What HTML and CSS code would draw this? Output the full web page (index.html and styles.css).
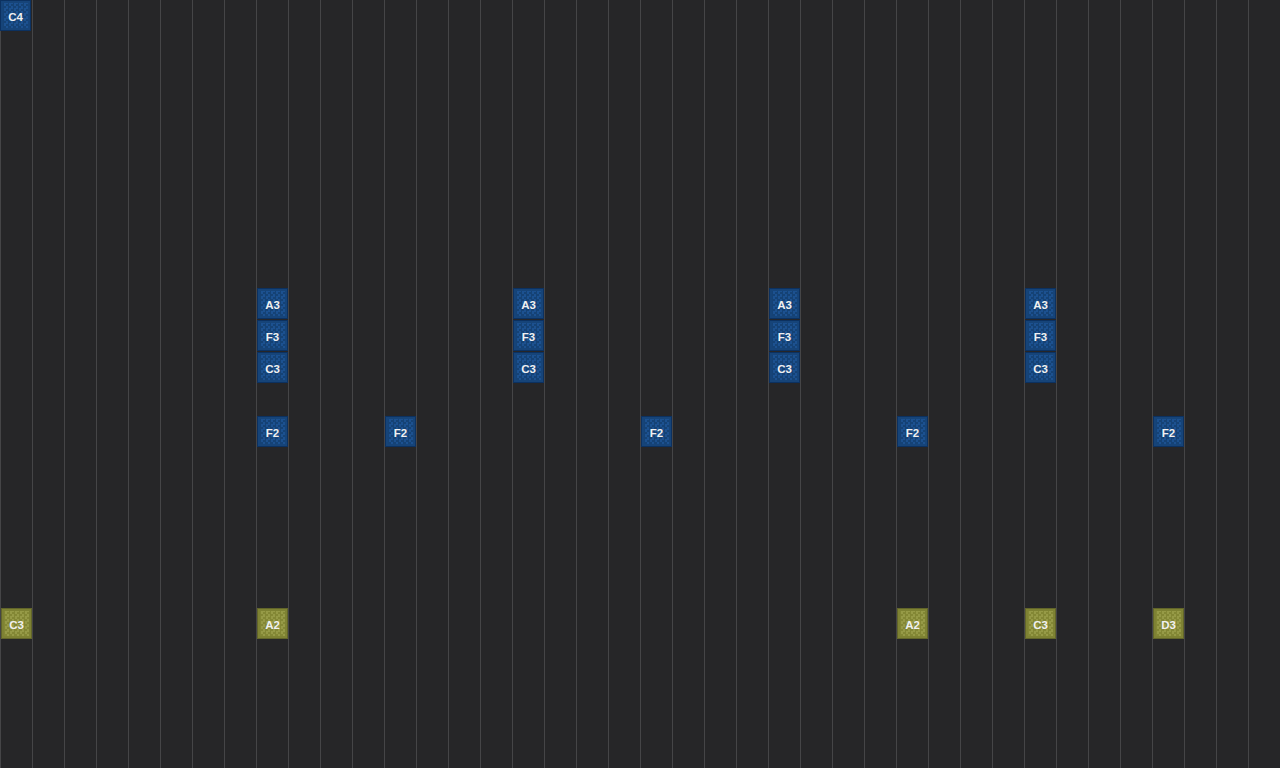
FILE: index.html
```html
<!DOCTYPE html>
<html>
<head>
<meta charset="utf-8">
<link rel="stylesheet" href="styles.css">
</head>
<body>
<div class="roll">
  <div class="note blue" style="left:0px;top:0px">C4</div>

  <div class="note blue" style="left:257px;top:288px">A3</div>
  <div class="note blue" style="left:257px;top:320px">F3</div>
  <div class="note blue" style="left:257px;top:352px">C3</div>
  <div class="note blue" style="left:257px;top:416px">F2</div>

  <div class="note blue" style="left:385px;top:416px">F2</div>

  <div class="note blue" style="left:513px;top:288px">A3</div>
  <div class="note blue" style="left:513px;top:320px">F3</div>
  <div class="note blue" style="left:513px;top:352px">C3</div>

  <div class="note blue" style="left:641px;top:416px">F2</div>

  <div class="note blue" style="left:769px;top:288px">A3</div>
  <div class="note blue" style="left:769px;top:320px">F3</div>
  <div class="note blue" style="left:769px;top:352px">C3</div>

  <div class="note blue" style="left:897px;top:416px">F2</div>

  <div class="note blue" style="left:1025px;top:288px">A3</div>
  <div class="note blue" style="left:1025px;top:320px">F3</div>
  <div class="note blue" style="left:1025px;top:352px">C3</div>

  <div class="note blue" style="left:1153px;top:416px">F2</div>

  <div class="note olive" style="left:1px;top:608px">C3</div>
  <div class="note olive" style="left:257px;top:608px">A2</div>
  <div class="note olive" style="left:897px;top:608px">A2</div>
  <div class="note olive" style="left:1025px;top:608px">C3</div>
  <div class="note olive" style="left:1153px;top:608px">D3</div>
</div>
</body>
</html>
```

FILE: styles.css
```css
html, body {
  margin: 0;
  padding: 0;
  width: 1280px;
  height: 768px;
  overflow: hidden;
  background: #262628;
}

.roll {
  position: relative;
  width: 1280px;
  height: 768px;
  background-color: #262628;
  background-image: linear-gradient(to right, #454547 0, #454547 1px, transparent 1px);
  background-size: 32px 768px;
  background-position: 0 0;
}

.note {
  position: absolute;
  box-sizing: border-box;
  width: 31px;
  height: 31px;
  padding-top: 3px;
  display: flex;
  align-items: center;
  justify-content: center;
  font-family: "Liberation Sans", Arial, sans-serif;
  font-weight: bold;
  font-size: 11.5px;
  color: #f0f0f0;
  border: 1px solid;
  background-size: 5px 5px;
}

.blue {
  border-color: #0c3160;
  background-color: #194a84;
  background-image: repeating-conic-gradient(#154275 0 25%, #1c5190 0 50%);
  box-shadow: inset 0 0 0 2px #164479;
}

.olive {
  border-color: #62652a;
  background-color: #8c903c;
  background-image: repeating-conic-gradient(#838735 0 25%, #969a47 0 50%);
  box-shadow: inset 0 0 0 2px #7e8233;
}
```
